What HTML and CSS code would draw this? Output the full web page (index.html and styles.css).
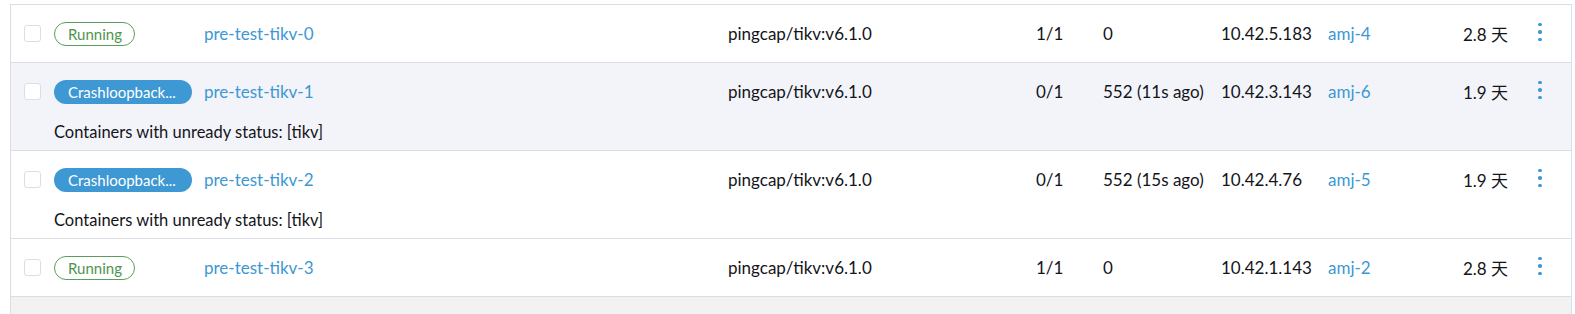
FILE: index.html
```html
<!DOCTYPE html>
<html>
<head>
<meta charset="utf-8">
<link rel="stylesheet" href="styles.css">
</head>
<body>
<div class="table">
  <div class="row">
    <div class="main">
      <span class="cb"></span>
      <span class="badge running">Running</span>
      <a class="link">pre-test-tikv-0</a>
      <span>pingcap/tikv:v6.1.0</span>
      <span>1/1</span>
      <span>0</span>
      <span>10.42.5.183</span>
      <a class="link">amj-4</a>
      <span>2.8 天</span>
      <span class="kebab"><i></i><i></i><i></i></span>
    </div>
  </div>
  <div class="row alt">
    <div class="main">
      <span class="cb"></span>
      <span class="badge crash">Crashloopback...</span>
      <a class="link">pre-test-tikv-1</a>
      <span>pingcap/tikv:v6.1.0</span>
      <span>0/1</span>
      <span>552 (11s ago)</span>
      <span>10.42.3.143</span>
      <a class="link">amj-6</a>
      <span>1.9 天</span>
      <span class="kebab"><i></i><i></i><i></i></span>
    </div>
    <div class="sub">Containers with unready status: [tikv]</div>
  </div>
  <div class="row">
    <div class="main">
      <span class="cb"></span>
      <span class="badge crash">Crashloopback...</span>
      <a class="link">pre-test-tikv-2</a>
      <span>pingcap/tikv:v6.1.0</span>
      <span>0/1</span>
      <span>552 (15s ago)</span>
      <span>10.42.4.76</span>
      <a class="link">amj-5</a>
      <span>1.9 天</span>
      <span class="kebab"><i></i><i></i><i></i></span>
    </div>
    <div class="sub">Containers with unready status: [tikv]</div>
  </div>
  <div class="row">
    <div class="main">
      <span class="cb"></span>
      <span class="badge running">Running</span>
      <a class="link">pre-test-tikv-3</a>
      <span>pingcap/tikv:v6.1.0</span>
      <span>1/1</span>
      <span>0</span>
      <span>10.42.1.143</span>
      <a class="link">amj-2</a>
      <span>2.8 天</span>
      <span class="kebab"><i></i><i></i><i></i></span>
    </div>
  </div>
  <div class="footer"></div>
</div>
</body>
</html>
```
FILE: styles.css
```css
html, body {
  margin: 0;
  padding: 0;
  background: #ffffff;
}
body {
  font-family: Lato, "Noto Sans CJK SC", sans-serif;
  font-size: 17px;
  color: #141419;
  padding: 4px 3px 0 10px;
}
.table {
  border-top: 1px solid #dcdee7;
  border-left: 1px solid #dcdee7;
  border-right: 1px solid #dcdee7;
  width: 1560px;
}
.row {
  border-bottom: 1px solid #dcdee7;
  background: #ffffff;
}
.row.alt {
  background: #f3f4f9;
}
.main {
  display: grid;
  grid-template-columns: 30px 150px 524px 308px 67px 118px 107px 135px 67px 1fr;
  align-items: center;
  height: 57px;
  padding-left: 13px;
  white-space: nowrap;
}
.cb {
  width: 15px;
  height: 15px;
  border: 1px solid #dcdee7;
  border-radius: 3px;
  background: #fff;
}
.badge {
  justify-self: start;
  box-sizing: border-box;
  height: 24px;
  line-height: 22px;
  border-radius: 12px;
  font-size: 15px;
  white-space: nowrap;
}
.running {
  border: 1px solid #5a9e5a;
  color: #4e944e;
  background: #fff;
  padding: 0 12px 0 13px;
}
.crash {
  width: 138px;
  padding: 0 14px;
  background: #3d98d3;
  color: #ffffff;
  line-height: 24px;
  overflow: hidden;
}
.link {
  color: #3d98d3;
  text-decoration: none;
}
.kebab {
  display: flex;
  flex-direction: column;
  align-items: center;
  gap: 4px;
  width: 20px;
  margin-top: -3px;
}
.kebab i {
  display: block;
  width: 3.5px;
  height: 3.5px;
  border-radius: 50%;
  background: #3d98d3;
}
.sub {
  padding: 2px 0 8px 43px;
  line-height: 20px;
  font-size: 16.5px;
}
.footer {
  height: 19px;
  background: #f2f2f2;
}
```
